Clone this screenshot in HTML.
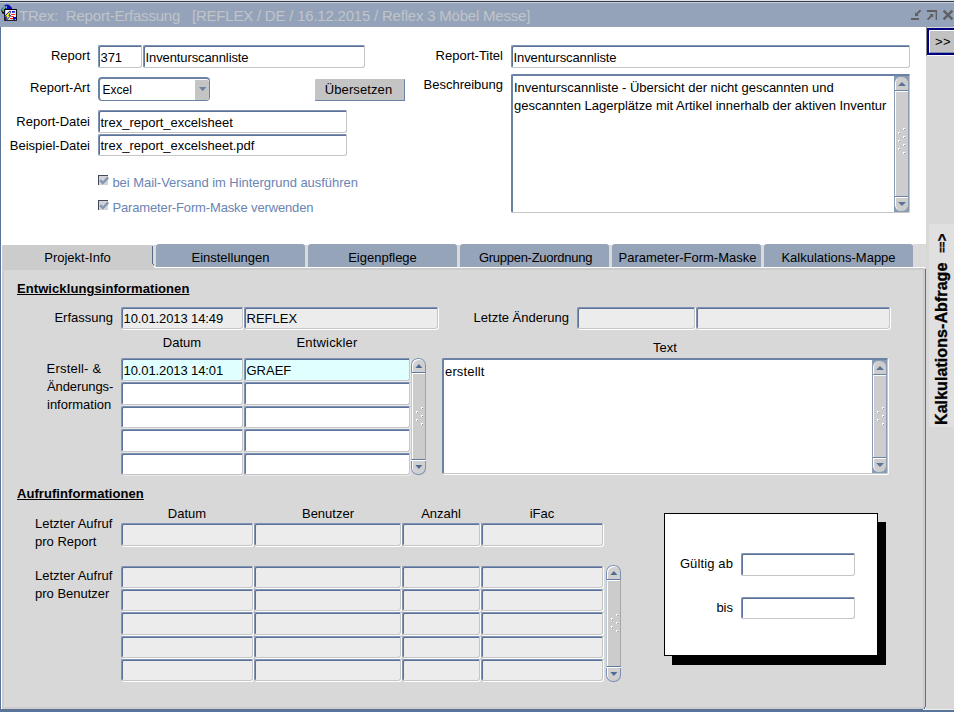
<!DOCTYPE html>
<html lang="de"><head><meta charset="utf-8"><title>TRex: Report-Erfassung</title>
<style>
*{box-sizing:border-box;margin:0;padding:0}
html,body{width:954px;height:712px;overflow:hidden;background:#fff}
body{position:relative;font-family:"Liberation Sans",sans-serif;font-size:13px;color:#000}
div,i,svg{position:absolute}
.l{white-space:nowrap;line-height:16px;height:16px}
.b{font-weight:bold;text-decoration:underline}
.g{color:#6a84b4}
.f{background:#fff;border-style:solid;border-width:1px;border-color:#8093b2 #c6c6c6 #c6c6c6 #8093b2;border-radius:2px 1px 3px 2px;padding-left:1.5px;white-space:nowrap;overflow:hidden;box-shadow:inset 1px 1px 0 #5b7399}
.f.dis{background:#ececec;box-shadow:inset 1px 1px 0 #5b7399,1px 1px 0 #fff}
.f.pw{box-shadow:inset 1px 1px 0 #5b7399,1px 1px 0 rgba(255,255,255,.45)}
.n{letter-spacing:-0.1px}
.f.cur{background:#e0ffff}
.ta{background:#fff;border-style:solid;border-width:2px 1px 1px 2px;border-color:#6a82a4 #c6c6c6 #c6c6c6 #6a82a4;border-radius:2px 1px 2px 2px;padding:3px 0 0 2px;line-height:18px;overflow:hidden}
.tab{top:244px;height:23px;width:149px;background:#95a4b9;border-radius:3px 3px 0 0;text-align:center;line-height:27px;white-space:nowrap}
.d{width:2px;height:2px;display:block;background:linear-gradient(135deg,#fff 0,#fff 55%,#7f92b0 56%,#7f92b0 100%)}
.sb{background:#8a9bb6;overflow:hidden}
.sbi{left:1px;right:1px;top:1px;bottom:1px;background:#cdcdcd;border-radius:6px;border-left:1px solid #fff}
.sp{background:#d0d0d0;border-radius:7px;overflow:hidden;box-shadow:inset 0 0 0 1px #7a90b2,inset 1px 1px 0 1px #fff}
.th{left:0;right:0;top:14px;bottom:15px;background:#cccccc;border-left:1px solid #bcc6d4;border-right:1px solid #a6a6a6;border-top:1px solid #5f7aa0;border-bottom:1px solid #5f7aa0;box-shadow:inset 1px 1px 0 #fff,0 1px 0 #fff}
.sl{left:1px;right:1px;height:2px;background:#6a82a4;border-bottom:1px solid #fff;box-sizing:border-box}
.ar{left:50%;margin-left:-4px}
</style></head><body>

<div style="left:0;top:0;width:954px;height:1px;background:#e2e2e2"></div>
<div style="left:0;top:1px;width:954px;height:1px;background:#2b3b52"></div>
<div style="left:0;top:2px;width:954px;height:25px;background:#94a3b9;border-top:1px solid #cdd1d6"></div>
<div style="left:0;top:27px;width:1px;height:685px;background:#5a7499"></div>
<div style="left:926px;top:27px;width:28px;height:683px;background:#d8d8d8"></div>
<div style="left:0;top:709px;width:954px;height:3px;background:#5a7499"></div>
<svg style="left:0;top:3px" width="20" height="20" viewBox="0 3 20 20">
<circle cx="7" cy="10" r="5.4" fill="#0a0ab4"/>
<path d="M1.6 9.5C1.4 11 1.8 12.6 2.8 13.8L3.6 12.6C2.8 11.6 2.6 10.6 2.8 9.5Z" fill="#000"/>
<path d="M2.4 8C3 6.6 4 5.6 5.2 5.2L5 8.4L3.6 12L2.3 11.2C2 10 2 9 2.4 8Z" fill="#5cae80"/>
<path d="M2 6.6L3.4 5.6L3.8 6.8L2.4 7.6ZM5.4 6.4L7 6L6.8 8.4L5.4 8ZM10.2 4.9L11.8 5.4L12 6.8L10.4 6Z" fill="#b8b0ee"/>
<rect x="4.7" y="9.5" width="11.7" height="10.8" fill="#fff" stroke="#000" stroke-width="1"/>
<rect x="11.9" y="11.1" width="3" height="1.6" fill="#0000d0"/>
<rect x="11.1" y="14.1" width="3.8" height="0.95" fill="#f00"/>
<rect x="11.1" y="16" width="2.7" height="0.95" fill="#f00"/>
<rect x="10" y="18" width="2.9" height="0.95" fill="#f00"/>
<rect x="13" y="17" width="3" height="2.8" fill="#0000d0"/>
<rect x="15" y="19" width="0.8" height="0.8" fill="#fff"/>
<path d="M5 17.2H6.6L5.6 20H5Z" fill="#0a0aa0"/>
<path d="M9.9 11.6L5 16.6H7.5L6 20.1L10.2 15.7H8.3L10.3 11.9Z" fill="#ff0" stroke="#0a0a96" stroke-width="1.5" stroke-linejoin="round" paint-order="stroke"/>
</svg>
<div class="l" style="left:19px;top:5.5px;font-size:15px;line-height:19px;height:19px;color:#c0c4c9;white-space:pre;letter-spacing:-0.21px">TRex:  Report-Erfassung   [REFLEX / DE / 16.12.2015 / Reflex 3 Möbel Messe]</div>
<svg style="left:908px;top:8px" width="46" height="14" viewBox="908 8 46 14" fill="#5f5f5f" stroke="none">
<rect x="911" y="18" width="8" height="2"/>
<path d="M920.6 10.2L916.5 14.3" stroke="#5f5f5f" stroke-width="1.9" fill="none"/>
<path d="M915 12.3V16H918.8Z"/>
<rect x="927" y="10" width="10" height="2"/><rect x="935.6" y="10" width="1.4" height="10"/>
<path d="M927.6 19.6L932 15.2" stroke="#5f5f5f" stroke-width="1.9" fill="none"/>
<path d="M929.4 14H933.2V17.8Z"/>
<path d="M943.6 10.6L952.4 19.4M952.4 10.6L943.6 19.4" stroke="#5f5f5f" stroke-width="2.3" fill="none"/>
</svg>
<div style="left:926px;top:27px;width:1px;height:29px;background:#8a8a8a"></div>
<div style="left:927px;top:55px;width:27px;height:1px;background:#fff"></div>
<div style="left:927px;top:28px;width:30px;height:27px;border:2px solid #000080;background:#c2c2c2"></div>
<div style="left:929px;top:30px;width:28px;height:23px;border-top:1px solid #fff;border-left:1px solid #fff;border-bottom:1px solid #7a90ae;border-radius:2px 0 0 2px"></div>
<div class="l" style="left:935px;top:34px;letter-spacing:0.5px">&gt;&gt;</div>
<div class="l " style="right:864px;top:48px;">Report</div>
<div class="f n" style="left:98px;top:45px;width:44px;height:23px;line-height:23px">371</div>
<div class="f n" style="left:143px;top:45px;width:222px;height:23px;line-height:23px">Inventurscannliste</div>
<div class="l " style="right:864px;top:80px;">Report-Art</div>
<div style="left:98px;top:77px;width:112px;height:24px;border-style:solid;border-color:#6a82a4;border-width:2px 1.4px 1.4px 2px;border-radius:4px;background:#fff;font-size:12px;line-height:23px;padding-left:2.6px;overflow:hidden">Excel</div>
<div style="left:195px;top:80px;width:13.5px;height:19.5px;background:#c4c4c4;border-radius:0 2px 2px 0"></div>
<svg style="left:199px;top:87px" width="8" height="4.4" viewBox="0 0 8 4.4"><path d="M0 0H7.4L3.7 4.2Z" fill="#6a82a4"/></svg>
<div style="left:315px;top:79px;width:90px;height:22px;background:#c4c4c4;border-right:1px solid #6a82a4;border-bottom:1px solid #6a82a4;border-radius:1px;text-align:center;line-height:21px;letter-spacing:0.1px;padding-right:2px">Übersetzen</div>
<div class="l " style="right:864px;top:114px;">Report-Datei</div>
<div class="f " style="left:98px;top:110px;width:249px;height:23px;line-height:23px">trex_report_excelsheet</div>
<div class="l " style="right:864px;top:138px;">Beispiel-Datei</div>
<div class="f " style="left:98px;top:134px;width:249px;height:22px;line-height:22px">trex_report_excelsheet.pdf</div>
<div style="left:98px;top:175px;width:10px;height:10px;background:#d4d4d4;border-top:1px solid #404a5c;border-left:1px solid #404a5c"></div>
<svg style="left:99px;top:176px" width="11" height="9" viewBox="0 0 11 9"><path d="M1.2 4.2L3.8 7L9.2 1.4" fill="none" stroke="#8797b7" stroke-width="2.5"/></svg>
<div class="l g" style="left:112.4px;top:175px;letter-spacing:-0.04px">bei Mail-Versand im Hintergrund ausführen</div>
<div style="left:98px;top:200px;width:10px;height:10px;background:#d4d4d4;border-top:1px solid #404a5c;border-left:1px solid #404a5c"></div>
<svg style="left:99px;top:201px" width="11" height="9" viewBox="0 0 11 9"><path d="M1.2 4.2L3.8 7L9.2 1.4" fill="none" stroke="#8797b7" stroke-width="2.5"/></svg>
<div class="l g" style="left:112.4px;top:200px;letter-spacing:-0.14px">Parameter-Form-Maske verwenden</div>
<div class="l " style="right:451px;top:48px;">Report-Titel</div>
<div class="f n" style="left:511px;top:45px;width:399px;height:23px;line-height:23px">Inventurscannliste</div>
<div class="l " style="right:451px;top:77px;">Beschreibung</div>
<div class="ta" style="left:511px;top:74px;width:399px;height:139px;padding-left:1px;letter-spacing:-0.02px">Inventurscannliste - Übersicht der nicht gescannten und<br>gescannten Lagerplätze mit Artikel innerhalb der aktiven Inventur</div>
<div class="sb" style="left:894px;top:76px;width:15px;height:136px"><div class="sbi"></div><div class="sl" style="top:14px"></div><div class="sl" style="bottom:14px"></div><svg class="ar" style="top:6px" width="8" height="4" viewBox="0 0 8 4"><path d="M0 4L4 0L8 4Z" fill="#5b7396"/></svg><svg class="ar" style="bottom:6px" width="8" height="4" viewBox="0 0 8 4"><path d="M0 0L4 4L8 0Z" fill="#5b7396"/></svg></div>
<i class="d" style="left:903px;top:128px"></i><i class="d" style="left:903px;top:136px"></i><i class="d" style="left:903px;top:144px"></i><i class="d" style="left:903px;top:152px"></i><i class="d" style="left:898px;top:132px"></i><i class="d" style="left:898px;top:140px"></i><i class="d" style="left:898px;top:148px"></i>
<div style="left:2px;top:244px;width:924px;height:26px;background:#dadada"></div>
<div style="left:1px;top:244px;width:912px;height:1px;background:#fff"></div>
<div style="left:2px;top:245px;width:151px;height:25px;background:#cccccc;border-radius:2px 3px 0 0;text-align:center;line-height:25px;padding-left:0px">Projekt-Info</div>
<div style="left:152px;top:246px;width:1px;height:18px;background:#556b8c"></div>
<div style="left:152.5px;top:263.5px;width:1.4px;height:1.6px;background:#556b8c"></div>
<div style="left:153px;top:265px;width:2px;height:2px;background:#cccccc"></div>
<div style="left:154px;top:266px;width:1px;height:1px;background:#fff"></div>
<div class="tab" style="left:156px">Einstellungen</div>
<div class="tab" style="left:308px">Eigenpflege</div>
<div class="tab" style="left:460px;letter-spacing:-0.27px;padding-left:2px">Gruppen-Zuordnung</div>
<div class="tab" style="left:612px;padding-left:2px">Parameter-Form-Maske</div>
<div class="tab" style="left:764px">Kalkulations-Mappe</div>
<div style="left:155px;top:267px;width:770px;height:1px;background:#fff"></div>
<div style="left:2px;top:268px;width:923px;height:441px;background:#cccccc"></div>
<div style="left:153px;top:268px;width:772px;height:2px;background:#cccccc"></div>
<div style="left:4px;top:270px;width:919px;height:437px;background:#d8d8d8"></div>
<div style="left:925px;top:269px;width:1px;height:438px;background:#5a7499"></div>
<div style="left:924px;top:707px;width:1.5px;height:1.6px;background:#5a7499"></div>
<div style="left:923px;top:709px;width:31px;height:1px;background:#ededed"></div>
<div style="left:925px;top:707px;width:1px;height:2px;background:#e4e4e4"></div>
<div style="left:1px;top:245px;width:1px;height:464px;background:#fff"></div>
<div class="l b" style="left:17px;top:281px;letter-spacing:0.08px">Entwicklungsinformationen</div>
<div class="l " style="right:841px;top:310px;">Erfassung</div>
<div class="f dis n" style="left:121px;top:307px;width:122px;height:22px;line-height:22px">10.01.2013 14:49</div>
<div class="f dis" style="left:244px;top:307px;width:194px;height:22px;line-height:22px">REFLEX</div>
<div class="l " style="right:385px;top:310px;">Letzte Änderung</div>
<div class="f dis" style="left:577px;top:307px;width:118px;height:22px;line-height:22px"></div>
<div class="f dis" style="left:696px;top:307px;width:194px;height:22px;line-height:22px"></div>
<div class="l " style="left:32px;width:300px;text-align:center;top:335px;">Datum</div>
<div class="l " style="left:177px;width:300px;text-align:center;top:335px;letter-spacing:0.17px">Entwickler</div>
<div class="l " style="left:515px;width:300px;text-align:center;top:340px;">Text</div>
<div class="l " style="left:46.6px;top:361px;letter-spacing:0.2px">Erstell- &amp;</div>
<div class="l " style="left:47px;top:379px;letter-spacing:-0.1px">Änderungs-</div>
<div class="l " style="left:47px;top:397px;">information</div>
<div class="f cur n pw" style="left:121px;top:358px;width:122px;height:23px;line-height:23px">10.01.2013 14:01</div>
<div class="f cur pw" style="left:244px;top:358px;width:166px;height:23px;line-height:23px">GRAEF</div>
<div class="f pw" style="left:121px;top:382px;width:122px;height:23px;line-height:23px"></div>
<div class="f pw" style="left:244px;top:382px;width:166px;height:23px;line-height:23px"></div>
<div class="f pw" style="left:121px;top:406px;width:122px;height:22px;line-height:22px"></div>
<div class="f pw" style="left:244px;top:406px;width:166px;height:22px;line-height:22px"></div>
<div class="f pw" style="left:121px;top:429px;width:122px;height:23px;line-height:23px"></div>
<div class="f pw" style="left:244px;top:429px;width:166px;height:23px;line-height:23px"></div>
<div class="f pw" style="left:121px;top:453px;width:122px;height:22px;line-height:22px"></div>
<div class="f pw" style="left:244px;top:453px;width:166px;height:22px;line-height:22px"></div>
<div class="sp" style="left:411px;top:358px;width:15px;height:117px"><div class="th"></div><svg class="ar" style="top:6px" width="8" height="4" viewBox="0 0 8 4"><path d="M0.4 4L3.9 0L7.4 4Z" fill="#4f6b93"/></svg><svg class="ar" style="bottom:6px" width="8" height="4" viewBox="0 0 8 4"><path d="M0.4 0L3.9 4L7.4 0Z" fill="#4f6b93"/></svg></div>
<i class="d" style="left:421px;top:407px"></i><i class="d" style="left:421px;top:415px"></i><i class="d" style="left:421px;top:423px"></i><i class="d" style="left:416px;top:411px"></i><i class="d" style="left:416px;top:419px"></i>
<div class="ta" style="left:442px;top:358px;width:446px;height:116px;box-shadow:1px 1px 0 #fff;padding:3px 0 0 1px;letter-spacing:0.15px">erstellt</div>
<div class="sb" style="left:872px;top:360px;width:15px;height:113px"><div class="sbi"></div><div class="sl" style="top:14px"></div><div class="sl" style="bottom:14px"></div><svg class="ar" style="top:6px" width="8" height="4" viewBox="0 0 8 4"><path d="M0 4L4 0L8 4Z" fill="#5b7396"/></svg><svg class="ar" style="bottom:6px" width="8" height="4" viewBox="0 0 8 4"><path d="M0 0L4 4L8 0Z" fill="#5b7396"/></svg></div>
<i class="d" style="left:882px;top:407px"></i><i class="d" style="left:882px;top:415px"></i><i class="d" style="left:882px;top:423px"></i><i class="d" style="left:877px;top:411px"></i><i class="d" style="left:877px;top:419px"></i>
<div class="l b" style="left:17px;top:486px;letter-spacing:0.06px">Aufrufinformationen</div>
<div class="l " style="left:37px;width:300px;text-align:center;top:506px;">Datum</div>
<div class="l " style="left:178px;width:300px;text-align:center;top:506px;">Benutzer</div>
<div class="l " style="left:291px;width:300px;text-align:center;top:506px;">Anzahl</div>
<div class="l " style="left:392px;width:300px;text-align:center;top:506px;">iFac</div>
<div class="l " style="left:35px;top:516px;">Letzter Aufruf</div>
<div class="l " style="left:35px;top:534px;">pro Report</div>
<div class="l " style="left:35px;top:568px;">Letzter Aufruf</div>
<div class="l " style="left:35px;top:586px;">pro Benutzer</div>
<div class="f dis" style="left:121px;top:523px;width:132px;height:23px;line-height:23px"></div>
<div class="f dis" style="left:254px;top:523px;width:147px;height:23px;line-height:23px"></div>
<div class="f dis" style="left:402px;top:523px;width:78px;height:23px;line-height:23px"></div>
<div class="f dis" style="left:481px;top:523px;width:122px;height:23px;line-height:23px"></div>
<div class="f dis" style="left:121px;top:566px;width:132px;height:22px;line-height:22px"></div>
<div class="f dis" style="left:254px;top:566px;width:147px;height:22px;line-height:22px"></div>
<div class="f dis" style="left:402px;top:566px;width:78px;height:22px;line-height:22px"></div>
<div class="f dis" style="left:481px;top:566px;width:122px;height:22px;line-height:22px"></div>
<div class="f dis" style="left:121px;top:589px;width:132px;height:22px;line-height:22px"></div>
<div class="f dis" style="left:254px;top:589px;width:147px;height:22px;line-height:22px"></div>
<div class="f dis" style="left:402px;top:589px;width:78px;height:22px;line-height:22px"></div>
<div class="f dis" style="left:481px;top:589px;width:122px;height:22px;line-height:22px"></div>
<div class="f dis" style="left:121px;top:612px;width:132px;height:23px;line-height:23px"></div>
<div class="f dis" style="left:254px;top:612px;width:147px;height:23px;line-height:23px"></div>
<div class="f dis" style="left:402px;top:612px;width:78px;height:23px;line-height:23px"></div>
<div class="f dis" style="left:481px;top:612px;width:122px;height:23px;line-height:23px"></div>
<div class="f dis" style="left:121px;top:636px;width:132px;height:22px;line-height:22px"></div>
<div class="f dis" style="left:254px;top:636px;width:147px;height:22px;line-height:22px"></div>
<div class="f dis" style="left:402px;top:636px;width:78px;height:22px;line-height:22px"></div>
<div class="f dis" style="left:481px;top:636px;width:122px;height:22px;line-height:22px"></div>
<div class="f dis" style="left:121px;top:659px;width:132px;height:22px;line-height:22px"></div>
<div class="f dis" style="left:254px;top:659px;width:147px;height:22px;line-height:22px"></div>
<div class="f dis" style="left:402px;top:659px;width:78px;height:22px;line-height:22px"></div>
<div class="f dis" style="left:481px;top:659px;width:122px;height:22px;line-height:22px"></div>
<div class="sp" style="left:606px;top:565px;width:15px;height:117px"><div class="th"></div><svg class="ar" style="top:6px" width="8" height="4" viewBox="0 0 8 4"><path d="M0.4 4L3.9 0L7.4 4Z" fill="#4f6b93"/></svg><svg class="ar" style="bottom:6px" width="8" height="4" viewBox="0 0 8 4"><path d="M0.4 0L3.9 4L7.4 0Z" fill="#4f6b93"/></svg></div>
<i class="d" style="left:616px;top:614px"></i><i class="d" style="left:616px;top:622px"></i><i class="d" style="left:616px;top:630px"></i><i class="d" style="left:611px;top:618px"></i><i class="d" style="left:611px;top:626px"></i>
<div style="left:672px;top:522px;width:214px;height:143px;background:#000"></div>
<div style="left:664px;top:513px;width:214px;height:143px;background:#fff;border:1px solid #000"></div>
<div class="l " style="right:221px;top:556px;letter-spacing:0.12px">Gültig ab</div>
<div class="f " style="left:741px;top:553px;width:114px;height:23px;line-height:23px"></div>
<div class="l " style="right:221px;top:600px;">bis</div>
<div class="f " style="left:741px;top:597px;width:114px;height:22px;line-height:22px"></div>
<div style="left:929px;top:224px;width:25px;height:203px;background:#e0e0e0"></div>
<div style="left:931.6px;top:424.5px;width:220px;height:20px;line-height:20px;transform-origin:0 0;transform:rotate(-90deg) scaleX(0.9446);font-weight:bold;font-size:17px;white-space:nowrap;-webkit-text-stroke:0.35px #000;letter-spacing:0.05px">Kalkulations-Abfrage <span style="font-size:10px;position:relative;top:-0.9px;letter-spacing:0px;margin-left:5.6px">==</span><span style="font-size:14px;position:relative;top:-0.5px;left:0.6px">&gt;</span></div>
</body></html>
